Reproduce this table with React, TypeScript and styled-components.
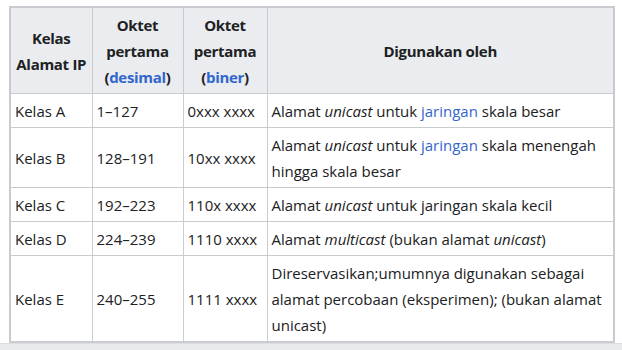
import React from "react"
import styled, { createGlobalStyle } from "styled-components"

const GlobalStyle = createGlobalStyle`
  html, body {
    margin: 0;
    padding: 0;
    background: #ffffff;
  }
  body {
    font-family: "Open Sans", "Noto Sans", "Liberation Sans", sans-serif;
    color: #202122;
  }
`

const Page = styled.div`
  width: 622px;
  height: 350px;
  display: flex;
  flex-direction: column;
  overflow: hidden;
`

const Content = styled.div`
  flex: 1;
  padding: 6px 0 0 9px;
`

const Footer = styled.div`
  height: 6px;
  background: #e9eaec;
  border-top: 1px solid #dcdddf;
`

const Table = styled.table`
  border-collapse: collapse;
  width: 606px;
  table-layout: fixed;
  font-size: 15px;
  line-height: 26px;
  border: 2px solid #c8ccd1;
`

const HeadCell = styled.th`
  background: #eaecf0;
  border: 1px solid #c8ccd1;
  padding: 3.5px 3px;
  font-weight: 700;
  letter-spacing: -0.3px;
  text-align: center;
  vertical-align: middle;
`

const NoWrap = styled.span`
  white-space: nowrap;
`

const Cell = styled.td`
  border: 1px solid #c8ccd1;
  padding: 3.5px 4px;
  text-align: left;
  vertical-align: middle;
`

const Link = styled.a`
  color: #3366cc;
  text-decoration: none;
`

const rows: { kelas: string; dec: string; bin: string; use: React.ReactNode }[] = [
  {
    kelas: "Kelas A",
    dec: "1–127",
    bin: "0xxx xxxx",
    use: (
      <>
        Alamat <i>unicast</i> untuk <Link>jaringan</Link> skala besar
      </>
    ),
  },
  {
    kelas: "Kelas B",
    dec: "128–191",
    bin: "10xx xxxx",
    use: (
      <>
        Alamat <i>unicast</i> untuk <Link>jaringan</Link> skala menengah hingga skala besar
      </>
    ),
  },
  {
    kelas: "Kelas C",
    dec: "192–223",
    bin: "110x xxxx",
    use: (
      <>
        Alamat <i>unicast</i> untuk jaringan skala kecil
      </>
    ),
  },
  {
    kelas: "Kelas D",
    dec: "224–239",
    bin: "1110 xxxx",
    use: (
      <>
        Alamat <i>multicast</i> (bukan alamat <i>unicast</i>)
      </>
    ),
  },
  {
    kelas: "Kelas E",
    dec: "240–255",
    bin: "1111 xxxx",
    use: (
      <>
        Direservasikan;umumnya digunakan sebagai alamat percobaan (eksperimen); (bukan alamat unicast)
      </>
    ),
  },
]

export default function App() {
  return (
    <Page>
      <GlobalStyle />
      <Content>
        <Table>
          <colgroup>
            <col style={{ width: 82 }} />
            <col style={{ width: 91 }} />
            <col style={{ width: 84 }} />
            <col />
          </colgroup>
          <thead>
            <tr>
              <HeadCell>
                Kelas <NoWrap>Alamat IP</NoWrap>
              </HeadCell>
              <HeadCell>
                Oktet pertama (<Link>desimal</Link>)
              </HeadCell>
              <HeadCell>
                Oktet pertama (<Link>biner</Link>)
              </HeadCell>
              <HeadCell>Digunakan oleh</HeadCell>
            </tr>
          </thead>
          <tbody>
            {rows.map(r => (
              <tr key={r.kelas}>
                <Cell>{r.kelas}</Cell>
                <Cell>{r.dec}</Cell>
                <Cell>{r.bin}</Cell>
                <Cell>{r.use}</Cell>
              </tr>
            ))}
          </tbody>
        </Table>
      </Content>
      <Footer />
    </Page>
  )
}
